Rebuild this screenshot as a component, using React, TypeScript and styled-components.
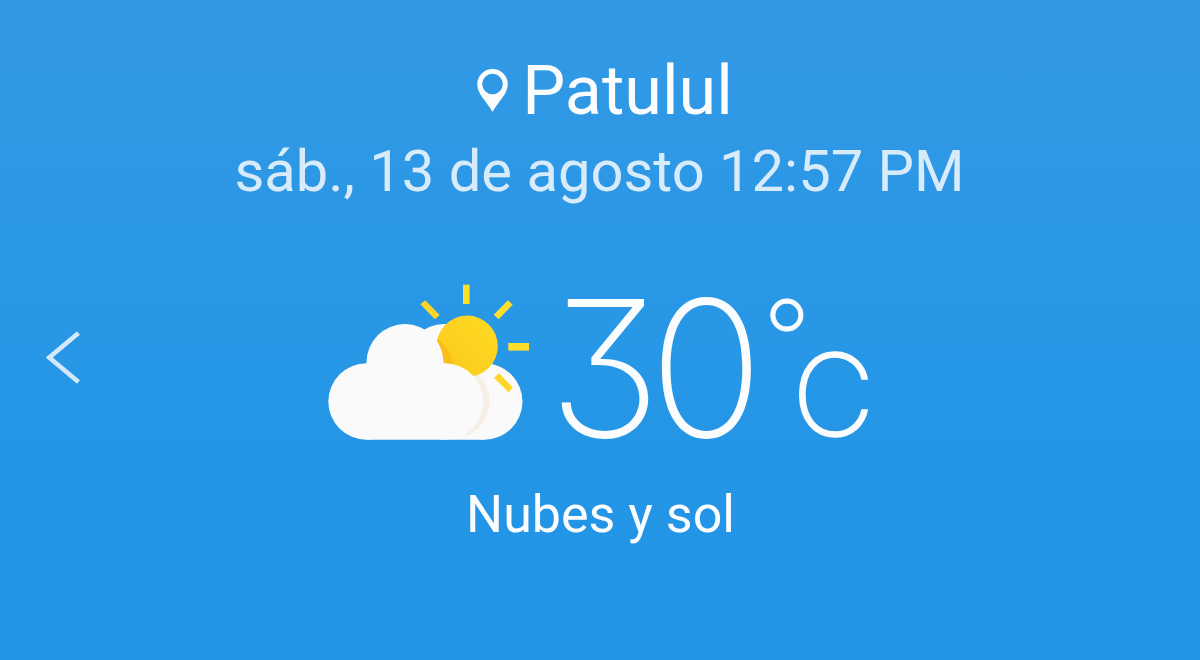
import styled, { createGlobalStyle } from "styled-components";

const GlobalStyle = createGlobalStyle`
    * {
        box-sizing: border-box;
    }
    body {
        margin: 0;
        font-family: Roboto, "Liberation Sans", sans-serif;
    }
`;
const Widget = styled.main`
    width: 1200px;
    height: 660px;
    display: grid;
    grid-template-columns: 110px 1fr 110px;
    background: linear-gradient(#3399e4, #2797e6 50%, #2194e6);
    color: #fafcfe;
    overflow: hidden;
`;
const PrevButton = styled.button`
    height: 53px;
    margin: 331px 0 0 46px;
    padding: 0;
    border: 0;
    background: none;
    display: flex;
`;
const Content = styled.section`
    display: flex;
    flex-direction: column;
    align-items: center;
`;
const City = styled.h1`
    height: 80px;
    margin: 51px 0 0;
    padding-left: 10px;
    display: flex;
    align-items: center;
    gap: 14px;
    font-size: 68.3px;
    font-weight: 400;
    line-height: 80px;

    svg {
        margin-bottom: 2px;
    }
`;
const DateText = styled.div`
    height: 70px;
    margin-top: 5px;
    padding-right: 1px;
    color: #d8ebfb;
    font-size: 57.9px;
    line-height: 70px;
    white-space: nowrap;
`;
const Weather = styled.div`
    width: 544px;
    height: 156px;
    margin-top: 78px;
    display: flex;

    svg {
        flex-shrink: 0;
    }
`;
const Temperature = styled.div`
    margin-left: 18px;
    display: flex;
    flex-shrink: 0;
    font-family: Inter, "Liberation Sans", sans-serif;
    font-weight: 200;
    font-feature-settings: "cv09" 1;
`;
const Glyph = styled.span<{ $size: number; $width: number; $line: number; $stroke?: number }>`
    width: ${({ $width }) => $width}px;
    flex-shrink: 0;
    font-size: ${({ $size }) => $size}px;
    line-height: ${({ $line }) => $line}px;
    -webkit-text-stroke: ${({ $stroke = 0 }) => $stroke}px currentColor;
`;
const Condition = styled.div`
    height: 62px;
    margin-top: 44px;
    padding-left: 1px;
    font-size: 52px;
    line-height: 62px;
`;

const Pin = () => (
    <svg width="31" height="43" viewBox="0 0 31 43">
        <path
            fill="currentColor"
            fillRule="evenodd"
            d="M15.5 0A15.3 15.3 0 0 0 .2 15.3C.2 25 10 33 15.5 43C21 33 30.8 25 30.8 15.3A15.3 15.3 0 0 0 15.5 0ZM15.5 4.7a10.3 10.3 0 1 1 0 20.6a10.3 10.3 0 1 1 0-20.6Z"
        />
    </svg>
);

const CloudSun = () => (
    <svg width="202" height="156" viewBox="328 284 202 156">
        <defs>
            <linearGradient id="sun" x1="0" y1="1" x2="1" y2="0">
                <stop offset="0" stopColor="#fcc81b" />
                <stop offset="1" stopColor="#fedb24" />
            </linearGradient>
            <clipPath id="sunClip">
                <circle cx="467.2" cy="346.2" r="30.6" />
            </clipPath>
            <clipPath id="backClip">
                <circle cx="484.3" cy="401.5" r="38.2" />
            </clipPath>
        </defs>
        <g fill="#fafafa">
            <circle cx="444" cy="362.5" r="38.5" />
            <circle cx="484.3" cy="401.5" r="38.2" />
            <path d="M444 364H484V439.7H444Z" />
        </g>
        <circle cx="451.5" cy="401.5" r="38" fill="#f5efe6" clipPath="url(#backClip)" />
        <circle cx="467.2" cy="346.2" r="30.6" fill="url(#sun)" />
        <circle cx="412" cy="372" r="42" fill="#fbbd17" clipPath="url(#sunClip)" />
        <g fill="#fafafa">
            <circle cx="366.5" cy="401.5" r="38.2" />
            <circle cx="405" cy="362.5" r="38.5" />
            <circle cx="445" cy="401.5" r="38.2" />
            <path d="M366.5 363.3H445V439.7H366.5Z" />
        </g>
        <g fill="#fedf2b">
            <path d="M463 284.7h6.6V304H463Z" />
            <path d="M508.3 343H529v7.6H508.3Z" />
            <path d="M508 300.3L512.7 304.7L498.7 319.3L493.7 314.7Z" />
            <path fill="#fdd526" d="M420.3 304.3L425.3 300.3L439.7 315L435 319.3Z" />
            <path fill="#fdd526" d="M494 377.7L499 373.3L512.7 387.3L508.7 392.3Z" />
        </g>
    </svg>
);

const App = () => {
    return (
        <>
            <GlobalStyle />
            <Widget>
                <PrevButton aria-label="Anterior">
                    <svg width="34" height="53" viewBox="0 0 34 53">
                        <path d="M32.5 2L3.2 26.5L32.5 51" fill="none" stroke="#d3e9fb" strokeWidth="4.6" />
                    </svg>
                </PrevButton>
                <Content>
                    <City>
                        <Pin />
                        Patulul
                    </City>
                    <DateText>sáb., 13 de agosto 12:57 PM</DateText>
                    <Weather>
                        <CloudSun />
                        <Temperature>
                            <Glyph $size={190} $width={101} $line={169}>3</Glyph>
                            <Glyph $size={190} $width={114} $line={169}>0</Glyph>
                            <Glyph $size={105} $width={29} $line={108} $stroke={0.8}>°</Glyph>
                            <Glyph $size={114} $width={72} $line={222} $stroke={1.4}>C</Glyph>
                        </Temperature>
                    </Weather>
                    <Condition>Nubes y sol</Condition>
                </Content>
            </Widget>
        </>
    );
};

export default App;
